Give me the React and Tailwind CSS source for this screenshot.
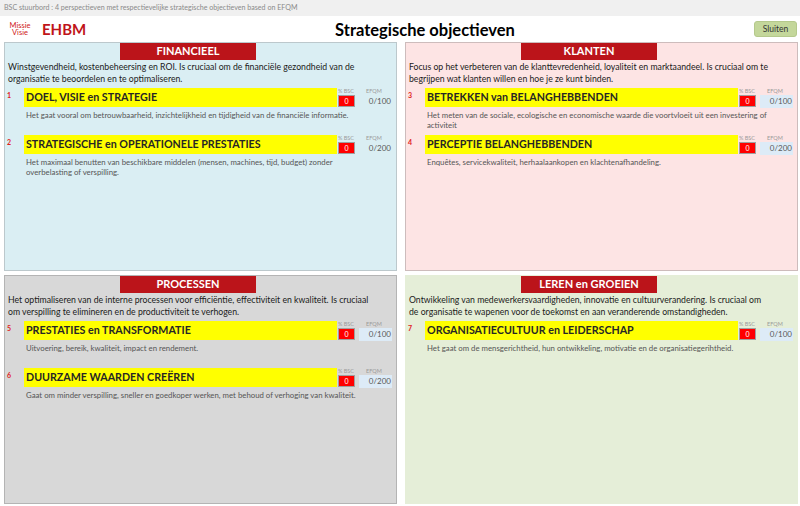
import React from 'react';

const perspectives = [
    {
        title: 'FINANCIEEL',
        bg: 'bg-[#daeef3]',
        border: 'border-[#bcc8cc]',
        efqmBg: 'bg-[#daeef3]',
        intro: [
            'Winstgevendheid, kostenbeheersing en ROI. Is cruciaal om de financiële gezondheid van de',
            'organisatie te beoordelen en te optimaliseren.',
        ],
        items: [
            {
                nr: 1,
                name: 'DOEL, VISIE en STRATEGIE',
                efqm: '0/100',
                desc: ['Het gaat vooral om betrouwbaarheid, inzichtelijkheid en tijdigheid van de financiële informatie.'],
            },
            {
                nr: 2,
                name: 'STRATEGISCHE en OPERATIONELE PRESTATIES',
                efqm: '0/200',
                desc: [
                    'Het maximaal benutten van beschikbare middelen (mensen, machines, tijd, budget) zonder',
                    'overbelasting of verspilling.',
                ],
            },
        ],
    },
    {
        title: 'KLANTEN',
        bg: 'bg-[#fde4e4]',
        border: 'border-[#cdbcbc]',
        efqmBg: 'bg-[#ddebf7]',
        intro: [
            'Focus op het verbeteren van de klanttevredenheid, loyaliteit en marktaandeel. Is cruciaal om te',
            'begrijpen wat klanten willen en hoe je ze kunt binden.',
        ],
        items: [
            {
                nr: 3,
                name: 'BETREKKEN van BELANGHEBBENDEN',
                efqm: '0/100',
                desc: [
                    'Het meten van de sociale, ecologische en economische waarde die voortvloeit uit een investering of',
                    'activiteit',
                ],
            },
            {
                nr: 4,
                name: 'PERCEPTIE BELANGHEBBENDEN',
                efqm: '0/200',
                desc: ['Enquêtes, servicekwaliteit, herhaalaankopen en klachtenafhandeling.'],
            },
        ],
    },
    {
        title: 'PROCESSEN',
        bg: 'bg-[#d8d8d8]',
        border: 'border-[#b4b4b4]',
        efqmBg: 'bg-[#ddebf7]',
        intro: [
            'Het optimaliseren van de interne processen voor efficiëntie, effectiviteit en kwaliteit. Is cruciaal',
            'om verspilling te elimineren en de productiviteit te verhogen.',
        ],
        items: [
            {
                nr: 5,
                name: 'PRESTATIES en TRANSFORMATIE',
                efqm: '0/100',
                desc: ['Uitvoering, bereik, kwaliteit, impact en rendement.'],
            },
            {
                nr: 6,
                name: 'DUURZAME WAARDEN CREËREN',
                efqm: '0/200',
                desc: ['Gaat om minder verspilling, sneller en goedkoper werken, met behoud of verhoging van kwaliteit.'],
            },
        ],
    },
    {
        title: 'LEREN en GROEIEN',
        bg: 'bg-[#e5eed8]',
        border: 'border-[#e5eed8]',
        efqmBg: 'bg-[#ddebf7]',
        intro: [
            'Ontwikkeling van medewerkersvaardigheden, innovatie en cultuurverandering. Is cruciaal om',
            'de organisatie te wapenen voor de toekomst en aan veranderende omstandigheden.',
        ],
        items: [
            {
                nr: 7,
                name: 'ORGANISATIECULTUUR en LEIDERSCHAP',
                efqm: '0/100',
                desc: ['Het gaat om de mensgerichtheid, hun ontwikkeling, motivatie en de organisatiegerihtheid.'],
            },
        ],
    },
];

const Objective = ({ item, efqmBg }) => (
    <div className="flex h-[47px]">
        <div className="w-[19px] pl-[2px] pt-[2px] text-[7px] font-bold text-[#e0201a] leading-[10px]">{item.nr}</div>
        <div className="flex flex-col">
            <div className="flex items-stretch">
                <div className="w-[313px] h-[19px] bg-[#ffff00] pl-[2px] flex items-center text-[10.7px] font-bold text-[#262626] whitespace-nowrap">
                    {item.name}
                </div>
                <div className="w-[20px] pl-[1px] flex flex-col">
                    <div className="h-[7px] text-[5.5px] leading-[7px] text-[#9a9a9a] whitespace-nowrap">% BSC</div>
                    <div className="w-[17px] h-[12px] bg-[#ff0000] border border-[#a0a0a0] text-white text-[7px] leading-[10px] text-center">0</div>
                </div>
                <div className="w-[33px] ml-[2px] flex flex-col">
                    <div className="h-[7px] text-[5.5px] leading-[7px] text-[#9a9a9a] pl-[7px]">EFQM</div>
                    <div className={`h-[13px] ${efqmBg} text-[8px] leading-[13px] text-right pr-[1px] text-[#595959]`}>
                        {item.efqm}
                    </div>
                </div>
            </div>
            <div className="pl-[2px] pt-[3px] text-[7.8px] leading-[9.5px] text-[#555] whitespace-nowrap">
                {item.desc.map((line) => (
                    <div key={line}>{line}</div>
                ))}
            </div>
        </div>
    </div>
);

const Panel = ({ p }) => (
    <div className={`${p.bg} border ${p.border} flex flex-col`}>
        <div className="ml-[115px] w-[136px] h-[17px] bg-[#bb141a] text-white text-[11px] font-bold flex items-center justify-center">
            {p.title}
        </div>
        <div className="pl-[3px] pt-[1px] text-[8.7px] leading-[11.5px] text-[#1a1a1a] whitespace-nowrap">
            {p.intro.map((line) => (
                <div key={line}>{line}</div>
            ))}
        </div>
        <div className="pt-[4px] flex flex-col">
            {p.items.map((item) => (
                <Objective key={item.nr} item={item} efqmBg={p.efqmBg} />
            ))}
        </div>
    </div>
);

export default function App() {
    return (
        <div className="w-[800px] h-[506px] bg-white overflow-hidden" style={{ fontFamily: 'Lato, "Open Sans", sans-serif' }}>
            <div className="h-[16px] bg-[#f0f0f0] pl-[4px] text-[7.1px] leading-[16px] text-[#8a8a8a]">
                BSC stuurbord : 4 perspectieven met respectievelijke strategische objectieven based on EFQM
            </div>
            <div className="h-[26px] flex items-center">
                <div className="w-[100px] flex items-center">
                    <div className="w-[42px] flex flex-col items-center text-[7.5px] leading-[7.5px] text-[#d02020] pr-[2px]">
                        <span>Missie</span>
                        <span>Visie</span>
                    </div>
                    <span className="text-[15px] font-bold text-[#c0141a]">EHBM</span>
                </div>
                <div className="flex-1 text-center text-[16.5px] font-bold text-black pt-[3px]">Strategische objectieven</div>
                <div className="w-[50px] flex justify-end pr-[3px]">
                    <button className="w-[43px] h-[16px] bg-[#c4d79b] border border-[#b5c98c] rounded-[3px] text-[8.5px] text-[#333] leading-[14px]">
                        Sluiten
                    </button>
                </div>
            </div>
            <div className="grid grid-cols-[393px_393px] grid-rows-[229px_229px] gap-x-[8px] gap-y-[4px] pl-[4px]">
                {perspectives.map((p) => (
                    <Panel key={p.title} p={p} />
                ))}
            </div>
        </div>
    );
}
